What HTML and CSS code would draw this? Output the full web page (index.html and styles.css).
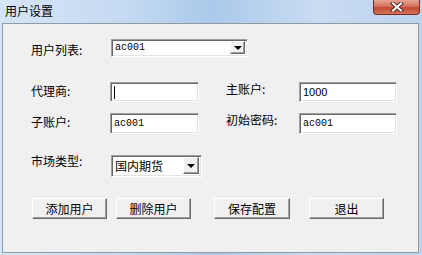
FILE: index.html
```html
<!DOCTYPE html>
<html lang="zh-CN">
<head>
  <meta charset="UTF-8" />
  <title>用户设置</title>
  <link rel="stylesheet" href="styles.css">
</head>
<body>
  <div class="window">
    <div class="titlebar">
      <span class="title">用户设置</span>
      <button class="close-btn">
        <svg width="14" height="10" viewBox="0 0 14 10">
          <path d="M3 1.5 L11 8.5 M11 1.5 L3 8.5" stroke="#5a2a24" stroke-width="4" stroke-linecap="square" />
          <path d="M3 1.5 L11 8.5 M11 1.5 L3 8.5" stroke="#fff" stroke-width="2" stroke-linecap="square" />
        </svg>
      </button>
    </div>

    <div class="client">
      <div class="row row-user">
        <span class="lbl lbl-user">用户列表:</span>
        <div class="combo combo-user">
          <span class="combo-text mono">ac001</span>
          <span class="drop-btn"><span class="arrow"></span></span>
        </div>
      </div>

      <div class="row row-agent">
        <span class="lbl">代理商:</span>
        <div class="edit field"><span class="caret"></span></div>
        <span class="lbl lbl-r">主账户:</span>
        <div class="edit field-r sans">1000</div>
      </div>

      <div class="row row-sub">
        <span class="lbl">子账户:</span>
        <div class="edit field mono">ac001</div>
        <span class="lbl lbl-r">初始密码:</span>
        <div class="edit field-r mono">ac001</div>
      </div>

      <div class="row row-market">
        <span class="lbl lbl-market">市场类型:</span>
        <div class="combo combo-market">
          <span class="combo-text cjk">国内期货</span>
          <span class="drop-btn"><span class="arrow"></span></span>
        </div>
      </div>

      <div class="row buttons">
        <button class="btn btn-add">添加用户</button>
        <button class="btn btn-del">删除用户</button>
        <button class="btn btn-save">保存配置</button>
        <button class="btn btn-exit">退出</button>
      </div>
    </div>
  </div>
</body>
</html>
```

FILE: styles.css
```css
body {
  margin: 0;
  font-family: "Noto Sans CJK SC", "Noto Sans", sans-serif;
  font-size: 12px;
  color: #000;
  overflow: hidden;
}
.window {
  width: 422px;
  height: 255px;
  display: flex;
  flex-direction: column;
  background: linear-gradient(to right, #d6e5f5 0%, #c4daf2 30%, #abc9ea 50%, #c8dcf2 75%, #bcd4ee 100%);
}
.titlebar {
  height: 23px;
  display: flex;
  align-items: flex-start;
  flex-shrink: 0;
}
.title {
  margin: 4px 0 0 5px;
  line-height: 14px;
  font-size: 12px;
}
.close-btn {
  margin: 0 2px 0 auto;
  width: 47px;
  height: 15px;
  padding: 0;
  border: 1px solid #7a2a22;
  border-top: none;
  border-radius: 0 0 4px 4px;
  background: linear-gradient(to bottom, #e8a393 0%, #d3735e 45%, #c24a32 55%, #d2755b 100%);
  display: flex;
  align-items: center;
  justify-content: center;
}
.client {
  flex: 1;
  margin: 0 3px 2px 2px;
  border: 1px solid #8e9aa6;
  background: #f0f0f0;
  padding: 15px 0 0 28px;
}
.row {
  display: flex;
  align-items: flex-start;
}
.row-user { height: 18px; }
.row-agent { height: 20px; margin-top: 25px; }
.row-sub { height: 21px; margin-top: 11px; }
.row-market { height: 22px; margin-top: 21px; }
.buttons { height: 21px; margin-top: 21px; }

.lbl {
  width: 79px;
  flex-shrink: 0;
  line-height: 12px;
  padding-top: 3px;
}
.lbl-user { padding-top: 5px; }
.lbl-market { padding-top: 0; }
.lbl-r {
  width: 73px;
  margin-left: 27px;
  padding-top: 1px;
}

.edit {
  box-sizing: border-box;
  height: 100%;
  background: #fff;
  border-top: 1px solid #a0a0a0;
  border-left: 1px solid #a0a0a0;
  border-right: 1px solid #fff;
  border-bottom: 1px solid #fff;
  box-shadow: inset 1px 1px 0 #696969, inset -1px -1px 0 #e3e3e3;
  padding: 0 3px;
  display: flex;
  align-items: center;
}
.field { width: 89px; }
.field-r { width: 98px; }
.mono {
  font-family: "Liberation Mono", monospace;
  font-size: 10px;
}
.sans {
  font-family: "Liberation Sans", sans-serif;
  font-size: 11px;
}
.caret {
  width: 1px;
  height: 13px;
  background: #000;
}

.combo {
  box-sizing: border-box;
  height: 100%;
  margin-left: 1px;
  background: #fff;
  border-top: 1px solid #a0a0a0;
  border-left: 1px solid #a0a0a0;
  border-right: 1px solid #fff;
  border-bottom: 1px solid #fff;
  box-shadow: inset 1px 1px 0 #696969, inset -1px -1px 0 #e3e3e3;
  padding: 1px 2px 2px 3px;
  display: flex;
  align-items: center;
}
.combo-user { width: 137px; }
.combo-market { width: 91px; }
.combo-text { flex: 1; }
.cjk { font-size: 12px; line-height: 14px; }
.drop-btn {
  box-sizing: border-box;
  width: 15px;
  height: 100%;
  background: #f0f0f0;
  border-top: 1px solid #fff;
  border-left: 1px solid #fff;
  border-right: 1px solid #696969;
  border-bottom: 1px solid #696969;
  box-shadow: inset -1px -1px 0 #a0a0a0;
  display: flex;
  align-items: center;
  justify-content: center;
}
.combo-market .drop-btn { width: 16px; }
.arrow {
  width: 0;
  height: 0;
  border-left: 4px solid transparent;
  border-right: 4px solid transparent;
  border-top: 4px solid #000;
}

.btn {
  box-sizing: border-box;
  width: 75px;
  height: 21px;
  padding: 0;
  font-family: "Noto Sans CJK SC", sans-serif;
  font-size: 12px;
  color: #000;
  background: #f0f0f0;
  border-top: 1px solid #fff;
  border-left: 1px solid #fff;
  border-right: 1px solid #696969;
  border-bottom: 1px solid #696969;
  box-shadow: inset -1px -1px 0 #a0a0a0;
}
.btn-add { margin-left: 1px; }
.btn-del { margin-left: 9px; }
.btn-save { margin-left: 23px; width: 76px; }
.btn-exit { margin-left: 19px; }
```
